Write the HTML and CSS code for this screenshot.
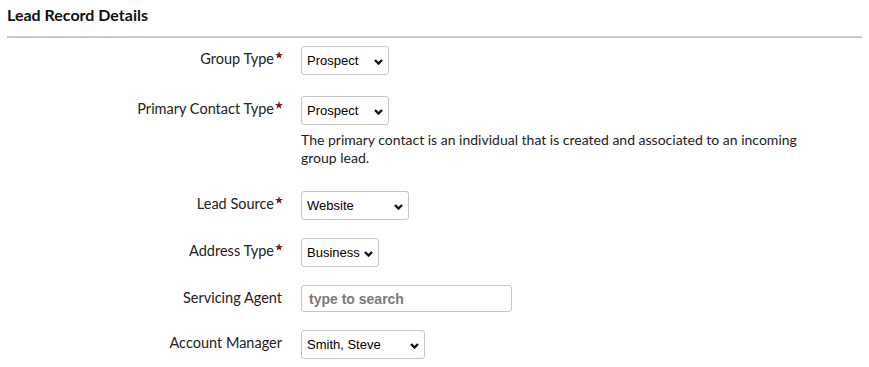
FILE: index.html
```
<!DOCTYPE html>
<html>
<head>
<meta charset="utf-8">
<link rel="stylesheet" href="styles.css">
</head>
<body>
<div class="panel">
  <h2 class="title">Lead Record Details</h2>
  <div class="form">
    <div class="row">
      <label class="lbl">Group Type<svg class="req" viewBox="0 0 10 10"><path d="M5 0 L6.2 3.6 L10 3.7 L7 6 L8.1 9.7 L5 7.5 L1.9 9.7 L3 6 L0 3.7 L3.8 3.6 Z"/></svg></label>
      <div class="field"><div class="sel w88">Prospect<svg class="chev" viewBox="0 0 9 6"><path d="M1 1 L4.5 4.5 L8 1"/></svg></div></div>
    </div>
    <div class="row r2">
      <label class="lbl">Primary Contact Type<svg class="req" viewBox="0 0 10 10"><path d="M5 0 L6.2 3.6 L10 3.7 L7 6 L8.1 9.7 L5 7.5 L1.9 9.7 L3 6 L0 3.7 L3.8 3.6 Z"/></svg></label>
      <div class="field">
        <div class="sel w88">Prospect<svg class="chev" viewBox="0 0 9 6"><path d="M1 1 L4.5 4.5 L8 1"/></svg></div>
        <p class="help">The primary contact is an individual that is created and associated to an incoming group lead.</p>
      </div>
    </div>
    <div class="row r3">
      <label class="lbl">Lead Source<svg class="req" viewBox="0 0 10 10"><path d="M5 0 L6.2 3.6 L10 3.7 L7 6 L8.1 9.7 L5 7.5 L1.9 9.7 L3 6 L0 3.7 L3.8 3.6 Z"/></svg></label>
      <div class="field"><div class="sel w108">Website<svg class="chev" viewBox="0 0 9 6"><path d="M1 1 L4.5 4.5 L8 1"/></svg></div></div>
    </div>
    <div class="row r4">
      <label class="lbl">Address Type<svg class="req" viewBox="0 0 10 10"><path d="M5 0 L6.2 3.6 L10 3.7 L7 6 L8.1 9.7 L5 7.5 L1.9 9.7 L3 6 L0 3.7 L3.8 3.6 Z"/></svg></label>
      <div class="field"><div class="sel w78">Business<svg class="chev" viewBox="0 0 9 6"><path d="M1 1 L4.5 4.5 L8 1"/></svg></div></div>
    </div>
    <div class="row r5">
      <label class="lbl">Servicing Agent</label>
      <div class="field"><div class="inp">type to search</div></div>
    </div>
    <div class="row r6">
      <label class="lbl">Account Manager</label>
      <div class="field"><div class="sel w124">Smith, Steve<svg class="chev" viewBox="0 0 9 6"><path d="M1 1 L4.5 4.5 L8 1"/></svg></div></div>
    </div>
  </div>
</div>
</body>
</html>
```
FILE: styles.css
```
html, body { margin: 0; padding: 0; background: #fff; }
body { font-family: "Lato", "Open Sans", sans-serif; color: #222; }
.panel { padding: 5px 7px 0 7px; }
.title { margin: 0; font-size: 16px; font-weight: 700; line-height: 19px; color: #111; padding-bottom: 12px; border-bottom: 2px solid #c8cad1; }
.form { padding-top: 8px; }
.row { display: grid; grid-template-columns: 275px 1fr; column-gap: 19px; margin-bottom: 21px; }
.row.r2 { margin-bottom: 24px; }
.row.r3 { margin-bottom: 18px; }
.row.r4 { margin-bottom: 18px; }
.row.r5 { margin-bottom: 18px; }
.lbl { text-align: right; font-size: 14.5px; line-height: 18px; padding-top: 4px; color: #222; white-space: nowrap; }
.req { width: 8px; height: 8px; fill: #8a1515; vertical-align: top; margin-top: 1px; margin-left: 1px; margin-right: -1px; }
.field { display: flex; flex-direction: column; align-items: flex-start; }
.sel { box-sizing: border-box; height: 29px; border: 1px solid #c6c6c6; border-radius: 3px; font-family: "Liberation Sans", Arial, sans-serif; font-size: 13px; color: #000; display: flex; align-items: center; padding-left: 5px; position: relative; background: #fff; }
.chev { position: absolute; right: 5px; top: 12px; width: 9px; height: 6px; fill: none; stroke: #111; stroke-width: 2.4; }
.w88 { width: 88px; }
.w108 { width: 108px; }
.w78 { width: 78px; }
.w124 { width: 124px; }
.inp { box-sizing: border-box; width: 211px; height: 27px; border: 1px solid #c6c6c6; border-radius: 3px; font-family: "Liberation Sans", Arial, sans-serif; font-weight: 700; font-size: 14px; color: #7a7a7a; display: flex; align-items: center; padding-left: 7px; }
.help { margin: 6px 0 0 0; font-size: 14px; line-height: 18px; color: #222; max-width: 520px; }
```
